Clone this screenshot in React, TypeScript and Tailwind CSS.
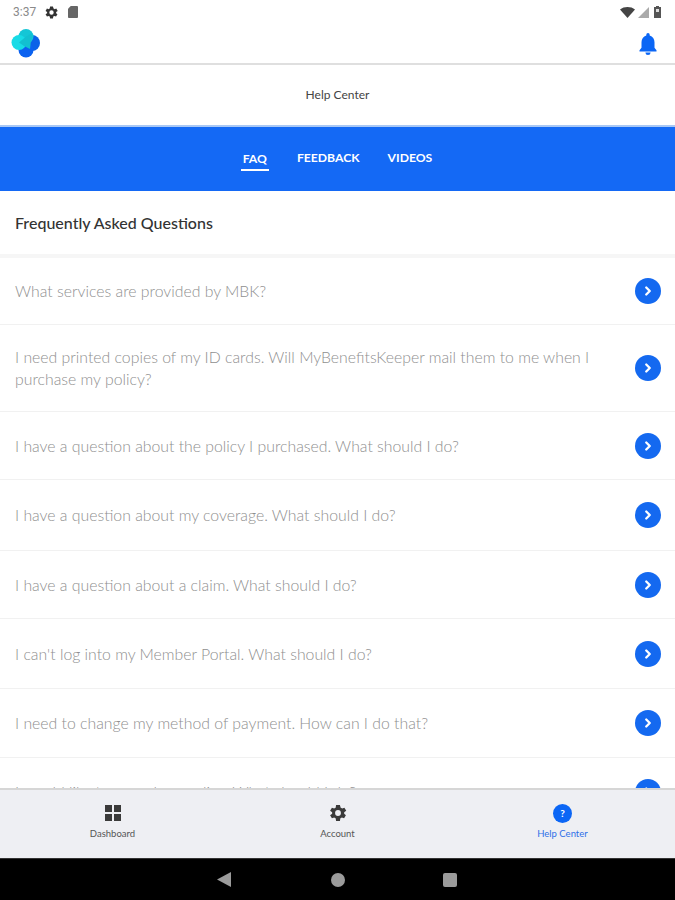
import { ChevronRight } from 'lucide-react'

const questions = [
  { text: 'What services are provided by MBK?', height: 'h-[67px]' },
  {
    text: 'I need printed copies of my ID cards. Will MyBenefitsKeeper mail them to me when I purchase my policy?',
    height: 'h-[87px]',
  },
  { text: 'I have a question about the policy I purchased. What should I do?', height: 'h-[68px]' },
  { text: 'I have a question about my coverage. What should I do?', height: 'h-[71px]' },
  { text: 'I have a question about a claim. What should I do?', height: 'h-[68px]' },
  { text: "I can't log into my Member Portal. What should I do?", height: 'h-[70px]' },
  { text: 'I need to change my method of payment. How can I do that?', height: 'h-[69px]' },
  { text: 'I would like to cancel my policy. What should I do?', height: 'h-[69px]' },
]

function StatusBar() {
  return (
    <div className="h-6 flex items-center justify-between pl-[13px] pr-[14px] bg-white">
      <div className="flex items-center gap-[8px]">
        <span className="text-[12px] text-[#8a8a8a] font-['Roboto',sans-serif]">3:37</span>
        <svg width="15" height="15" viewBox="0 0 24 24" fill="#333">
          <path fillRule="evenodd" d="M19.400 13a7.600 7.600 0 0 0 0-2l2.500-1.600-2.200-3.800-2.800 1a7.600 7.600 0 0 0-1.700-1L14.300 2.500H9.700l-.5 3.100a7.600 7.600 0 0 0-1.700 1l-2.800-1-2.200 3.800L5 11a7.600 7.600 0 0 0 0 2l-2.500 1.600 2.200 3.800 2.800-1a7.600 7.600 0 0 0 1.700 1l.5 3.100h4.600l.5-3.100a7.600 7.600 0 0 0 1.700-1l2.800 1 2.200-3.800zM12 15.500a3.500 3.500 0 1 1 0-7 3.500 3.500 0 0 1 0 7z" />
        </svg>
        <svg width="10" height="12" viewBox="0 0 11 13" fill="#666" className="ml-[1px]">
          <path d="M3 0h7a1 1 0 0 1 1 1v11a1 1 0 0 1-1 1H1a1 1 0 0 1-1-1V3z" />
        </svg>
      </div>
      <div className="flex items-center gap-[3px]">
        <svg width="15" height="11" viewBox="0 0 15 11" fill="#444">
          <path d="M0 2.500C4-.8 11-.8 15 2.500L7.500 11z" />
        </svg>
        <svg width="11" height="11" viewBox="0 0 11 11" fill="#aaa">
          <path d="M11 0v11H0z" />
        </svg>
        <svg width="7" height="12" viewBox="0 0 7 12" className="ml-[2px]">
          <path d="M2 0h3v1h2v11H0V1h2z" fill="#555" />
          <path d="M2 3h3v3H2z" fill="#ddd" />
        </svg>
      </div>
    </div>
  )
}

function Logo() {
  return (
    <svg width="30" height="30" viewBox="0 0 30 30" className="-mt-[2px]">
      <circle cx="21" cy="15" r="8" fill="#0b62e8" />
      <circle cx="15" cy="22" r="7.500" fill="#0b62f0" />
      <circle cx="15" cy="8.500" r="7.500" fill="#14c6d6" />
      <circle cx="8" cy="14.500" r="7.500" fill="#17dbe6" />
      <path d="M8 14.500 15 8.500l5.500-3.300a7.500 7.500 0 0 1 1 4L20 12l-1 9-6-3z" fill="#12c0d0" />
    </svg>
  )
}

function Header() {
  return (
    <div className="h-[41px] flex items-center justify-between pl-[11px] pr-[15px] bg-white border-b-2 border-[#dfdfdf]">
      <Logo />
      <svg width="24" height="24" viewBox="0 0 24 24" fill="#0b66f5">
        <path d="M12 23a2.600 2.600 0 0 0 2.600-2.500H9.400A2.600 2.600 0 0 0 12 23zm8.500-4.800-2-2.500v-5.400c0-3.300-1.800-6-4.800-6.800v-.8a1.700 1.700 0 0 0-3.400 0v.8c-3 .8-4.800 3.500-4.800 6.800v5.400l-2 2.500v1.200h17z" />
      </svg>
    </div>
  )
}

function Tabs() {
  return (
    <div className="h-[66px] bg-[#1469f5] border-t-2 border-[#a9c8f5] flex items-center justify-center gap-7 font-bold text-[12.200px] text-white pb-[1px] pr-[2px]">
      <span className="pb-[1px] border-b-2 border-white px-[2px] translate-y-[2px]">FAQ</span>
      <span>FEEDBACK</span>
      <span>VIDEOS</span>
    </div>
  )
}

function FaqRow({ text, height }: { text: string; height: string }) {
  return (
    <div className={`${height} shrink-0 flex items-center justify-between pl-[15px] pr-[14px] border-b border-[#f1f1f1]`}>
      <p className="w-[590px] text-[15.800px] font-light leading-[22px] text-[#8f8f8f]">{text}</p>
      <div className="w-[26px] h-[26px] rounded-full bg-[#1469f0] flex items-center justify-center shrink-0">
        <ChevronRight size={14} strokeWidth={4} className="text-white" />
      </div>
    </div>
  )
}

function NavItem({ label, active, children }: { label: string; active?: boolean; children: React.ReactNode }) {
  return (
    <div className="flex-1 flex flex-col items-center pt-[13px]">
      <div className="h-[20px] flex items-center justify-center">{children}</div>
      <span className={`mt-[5px] text-[9.500px] leading-[12px] ${active ? 'text-[#2f6fe8]' : 'text-[#555]'}`}>{label}</span>
    </div>
  )
}

function BottomNav() {
  return (
    <div className="h-[70px] shrink-0 bg-[#eeeff3] border-t-2 border-[#d6d6d6] flex">
      <NavItem label="Dashboard">
        <div className="grid grid-cols-2 gap-[2px]">
          <div className="w-[7px] h-[7px] bg-[#3a3a3a]" />
          <div className="w-[7px] h-[7px] bg-[#3a3a3a]" />
          <div className="w-[7px] h-[7px] bg-[#3a3a3a]" />
          <div className="w-[7px] h-[7px] bg-[#3a3a3a]" />
        </div>
      </NavItem>
      <NavItem label="Account">
        <svg width="20" height="20" viewBox="0 0 24 24" fill="#3a3a3a">
          <path fillRule="evenodd" d="M19.400 13a7.600 7.600 0 0 0 0-2l2.500-1.600-2.200-3.800-2.800 1a7.600 7.600 0 0 0-1.700-1L14.300 2.500H9.700l-.5 3.100a7.600 7.600 0 0 0-1.700 1l-2.800-1-2.200 3.800L5 11a7.600 7.600 0 0 0 0 2l-2.500 1.600 2.200 3.800 2.800-1a7.600 7.600 0 0 0 1.700 1l.5 3.100h4.600l.5-3.100a7.600 7.600 0 0 0 1.700-1l2.800 1 2.200-3.800zM12 15.500a3.500 3.500 0 1 1 0-7 3.500 3.500 0 0 1 0 7z" />
        </svg>
      </NavItem>
      <NavItem label="Help Center" active>
        <div className="w-[19px] h-[19px] rounded-full bg-[#0b66f5] flex items-center justify-center text-white text-[10px] font-bold">?</div>
      </NavItem>
    </div>
  )
}

function SystemBar() {
  return (
    <div className="h-[42px] shrink-0 bg-black border-t border-[#333] flex items-center justify-center gap-[100px] pr-[2px]">
      <svg width="14" height="15" viewBox="0 0 14 15" fill="#9b9b9b">
        <path d="M14 0v15L0 7.500z" />
      </svg>
      <div className="w-[14px] h-[14px] rounded-full bg-[#9b9b9b]" />
      <div className="w-[14px] h-[14px] rounded-[2px] bg-[#9b9b9b] -ml-[2px]" />
    </div>
  )
}

export default function App() {
  return (
    <div className="w-[675px] h-[900px] flex flex-col overflow-hidden bg-white font-['Lato',sans-serif]">
      <StatusBar />
      <Header />
      <div className="h-[60px] flex items-center justify-center text-[12px] text-[#444]">Help Center</div>
      <Tabs />
      <div className="flex-1 min-h-0 overflow-hidden flex flex-col">
        <div className="h-[67px] shrink-0 flex items-center pl-[15px] text-[16px] font-medium text-[#333] border-b-[4px] border-[#f6f6f6]">
          Frequently Asked Questions
        </div>
        {questions.map((q) => (
          <FaqRow key={q.text} text={q.text} height={q.height} />
        ))}
      </div>
      <BottomNav />
      <SystemBar />
    </div>
  )
}
